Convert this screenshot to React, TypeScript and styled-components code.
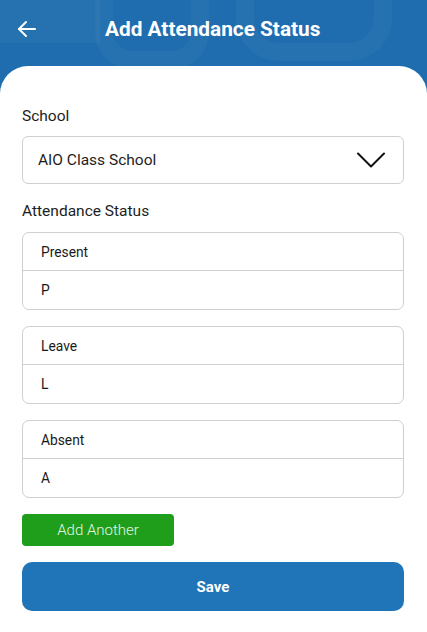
import React from 'react';
import styled, { createGlobalStyle } from 'styled-components';

const GlobalStyle = createGlobalStyle`
  html, body {
    margin: 0;
    padding: 0;
    background: #1f6dae;
    font-family: Roboto, "Noto Sans", Arial, sans-serif;
  }
  * {
    box-sizing: border-box;
  }
`;

const Page = styled.div`
  width: 427px;
  min-height: 632px;
  display: flex;
  flex-direction: column;
  background: #1f6dae;
`;

const Header = styled.header`
  position: relative;
  height: 66px;
  display: flex;
  align-items: flex-start;
  padding-top: 12px;
  overflow: hidden;
`;

const Pattern = styled.svg`
  position: absolute;
  left: 0;
  top: 0;
`;

const BackButton = styled.button`
  position: relative;
  width: 54px;
  height: 34px;
  display: flex;
  align-items: center;
  justify-content: center;
  background: none;
  border: none;
  padding: 0;
  color: #fff;
`;

const Title = styled.h1`
  position: relative;
  margin: 0 0 0 51px;
  font-size: 20.8px;
  line-height: 34px;
  font-weight: 700;
  color: #fff;
`;

const Sheet = styled.main`
  flex: 1;
  background: #fff;
  border-radius: 28px 28px 0 0;
  padding: 40px 23px 22px 22px;
  display: flex;
  flex-direction: column;
`;

const Label = styled.div<{ $gap: number }>`
  font-size: 15.5px;
  color: #1d1d1d;
  line-height: 20px;
  margin-bottom: ${({ $gap }) => $gap}px;
`;

const Select = styled.div`
  height: 48px;
  border: 1px solid #cfcfcf;
  border-radius: 6px;
  display: flex;
  align-items: center;
  justify-content: space-between;
  padding: 0 18px 0 15px;
  font-size: 15.5px;
  color: #1d1d1d;
  margin-bottom: 17px;
`;

const StatusCard = styled.div`
  border: 1px solid #cfcfcf;
  border-radius: 7px;
  display: flex;
  flex-direction: column;
  margin-bottom: 16px;
`;

const StatusRow = styled.div<{ $divider?: boolean }>`
  height: 38px;
  display: flex;
  align-items: center;
  padding-left: 18px;
  font-size: 13.8px;
  color: #1a1a1a;
  border-bottom: ${({ $divider }) => ($divider ? '1px solid #cfcfcf' : 'none')};
`;

const AddButton = styled.button`
  width: 152px;
  height: 32px;
  border: none;
  border-radius: 4px;
  background: #1f9e1c;
  color: #e4f5e2;
  font-family: Roboto, Arial, sans-serif;
  font-size: 15px;
  font-weight: 300;
  padding: 0;
`;

const SaveButton = styled.button`
  margin-top: 16px;
  height: 49px;
  width: 100%;
  border: none;
  border-radius: 10px;
  background: #1f75b7;
  color: #fff;
  font-family: Roboto, Arial, sans-serif;
  font-size: 15px;
  font-weight: 700;
`;

const statuses = [
  { name: 'Present', code: 'P' },
  { name: 'Leave', code: 'L' },
  { name: 'Absent', code: 'A' },
];

function App() {
  return (
    <Page>
      <GlobalStyle />
      <Header>
        <Pattern width="427" height="66" viewBox="0 0 427 66">
          <rect x="0" y="0" width="100" height="43" fill="rgba(255,255,255,0.03)" />
          <rect x="104" y="-40" width="96" height="100" rx="28" fill="none" stroke="rgba(255,255,255,0.035)" strokeWidth="18" />
          <rect x="245" y="-40" width="138" height="92" rx="34" fill="none" stroke="rgba(255,255,255,0.035)" strokeWidth="18" />
        </Pattern>
        <BackButton aria-label="Back">
          <svg width="20" height="18" viewBox="0 0 20 18" fill="none" stroke="#fff" strokeWidth="2" strokeLinecap="round" strokeLinejoin="round">
            <path d="M18 9H2" />
            <path d="M9 2L2 9l7 7" />
          </svg>
        </BackButton>
        <Title>Add Attendance Status</Title>
      </Header>
      <Sheet>
        <Label $gap={10}>School</Label>
        <Select>
          <span>AIO Class School</span>
          <svg width="28" height="16" viewBox="0 0 28 16" fill="none" stroke="#111" strokeWidth="2" strokeLinecap="round" strokeLinejoin="round">
            <path d="M1 1.5l13 13 13-13" />
          </svg>
        </Select>
        <Label $gap={11}>Attendance Status</Label>
        {statuses.map((s) => (
          <StatusCard key={s.code}>
            <StatusRow $divider>{s.name}</StatusRow>
            <StatusRow>{s.code}</StatusRow>
          </StatusCard>
        ))}
        <AddButton>Add Another</AddButton>
        <SaveButton>Save</SaveButton>
      </Sheet>
    </Page>
  );
}

export default App;
